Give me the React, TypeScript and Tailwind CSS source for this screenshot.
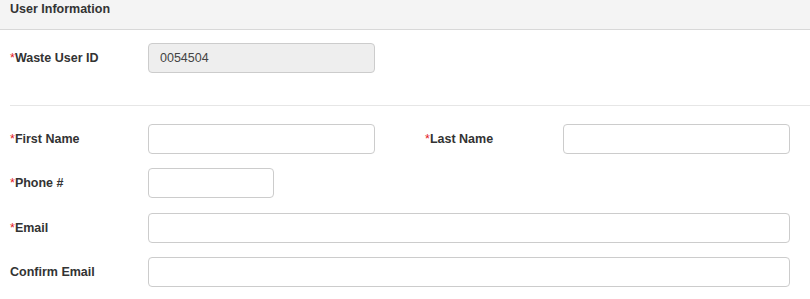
import React from "react";

function Label({ text, required }: { text: string; required?: boolean }) {
  return (
    <label className="w-[138px] shrink-0 text-[12.5px] font-bold text-[#333] leading-[30px]">
      {required && <span className="text-[#e4181c] font-normal">*</span>}
      {text}
    </label>
  );
}

function Input({ width, value, disabled }: { width: string; value?: string; disabled?: boolean }) {
  return (
    <input
      readOnly
      value={value ?? ""}
      disabled={disabled}
      className={
        "h-[30px] rounded-[4px] border border-[#cccccc] px-[11px] text-[12.5px] text-[#444] outline-none " +
        width +
        (disabled ? " bg-[#eeeeee]" : " bg-white")
      }
    />
  );
}

export default function App() {
  return (
    <div className="w-[810px] h-[299px] bg-white overflow-hidden font-['Liberation_Sans',Arial,sans-serif]">
      {/* Header */}
      <div className="h-[30px] bg-[#f4f4f4] border-b border-[#d8d8d8] px-[10px]">
        <h2 className="text-[12.5px] font-bold text-[#333] leading-[18px]">User Information</h2>
      </div>

      {/* Waste user id */}
      <div className="flex items-center pl-[10px] mt-[13px]">
        <Label text="Waste User ID" required />
        <Input width="w-[227px]" value="0054504" disabled />
      </div>

      <div className="ml-[10px] mt-[32px] border-t border-[#e6e6e6]" />

      <div className="flex flex-col gap-[14px] pl-[10px] pr-[20px] mt-[18px]">
        <div className="flex items-center">
          <div className="flex items-center w-[415px]">
            <Label text="First Name" required />
            <Input width="w-[227px]" />
          </div>
          <div className="flex items-center">
            <Label text="Last Name" required />
            <Input width="w-[227px]" />
          </div>
        </div>
        <div className="flex items-center">
          <Label text="Phone #" required />
          <Input width="w-[126px]" />
        </div>
        <div className="flex items-center mt-[1px]">
          <Label text="Email" required />
          <Input width="flex-1" />
        </div>
        <div className="flex items-center">
          <Label text="Confirm Email" />
          <Input width="flex-1" />
        </div>
      </div>
    </div>
  );
}
